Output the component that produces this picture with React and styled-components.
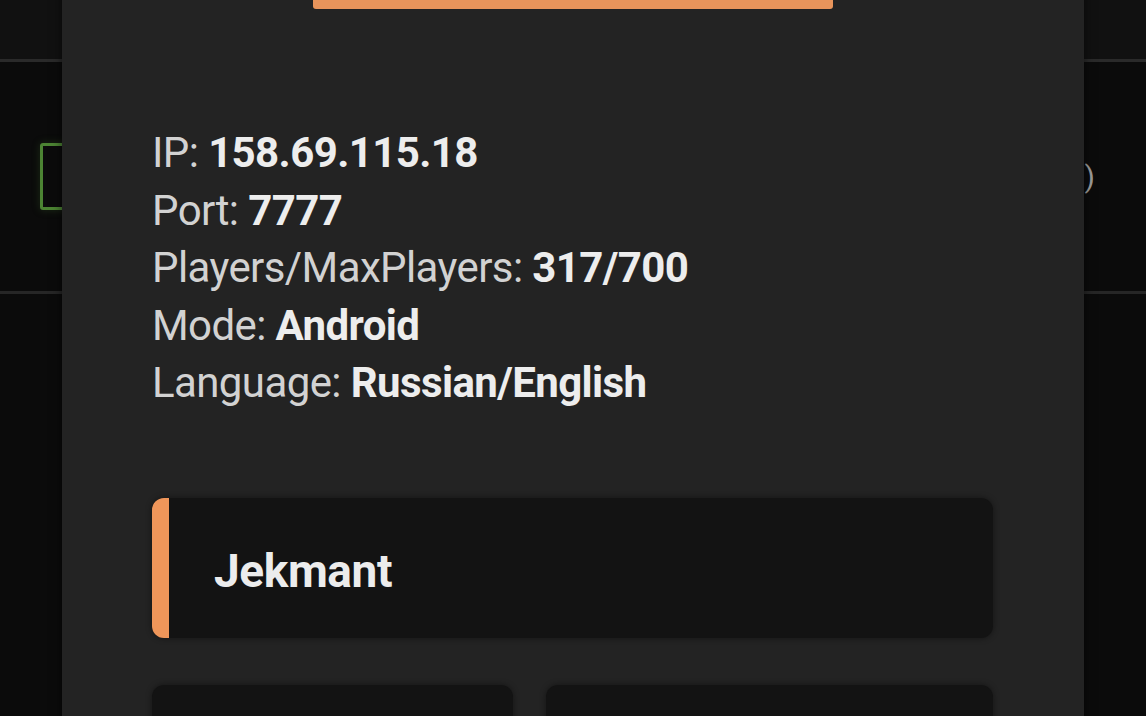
import React from "react";
import styled, { createGlobalStyle } from "styled-components";

const GlobalStyle = createGlobalStyle`
  html, body {
    margin: 0;
    padding: 0;
    width: 1146px;
    height: 716px;
    overflow: hidden;
    background: #0b0b0b;
    font-family: Roboto, "Liberation Sans", sans-serif;
  }
`;

const Page = styled.div`
  position: relative;
  width: 1146px;
  height: 716px;
  overflow: hidden;
  display: flex;
  flex-direction: column;
`;

const TopBar = styled.div`
  height: 59px;
  background: #111111;
  border-bottom: 3px solid #2a2a2a;
`;

const ServerRow = styled.div`
  height: 229px;
  display: flex;
  align-items: center;
  justify-content: space-between;
  padding: 0 51px 0 40px;
  background: #0b0b0b;
  border-bottom: 3px solid #262626;
`;

const StatusBox = styled.div`
  width: 60px;
  height: 61px;
  border: 3px solid #4c8433;
  border-radius: 3px;
  box-shadow: 0 0 8px rgba(76, 132, 51, 0.25);
`;

const Online = styled.span`
  font-size: 30px;
  color: #9c9c9c;
`;

const Dialog = styled.div`
  position: absolute;
  left: 62px;
  top: -50px;
  width: 1022px;
  background: #232323;
  box-shadow: 0 0 10px rgba(0, 0, 0, 0.6);
  padding: 0 91px 200px 90px;
  box-sizing: border-box;
  display: flex;
  flex-direction: column;

  & > * {
    flex-shrink: 0;
  }
`;

const ConnectButton = styled.div`
  align-self: center;
  width: 520px;
  height: 59px;
  background: #e8945b;
  border-radius: 0 0 3px 3px;
`;

const InfoList = styled.div`
  margin-top: 115px;
  display: flex;
  flex-direction: column;
`;

const InfoLine = styled.div`
  font-size: 42px;
  line-height: 57.5px;
  letter-spacing: -0.6px;
  color: #d2d2d2;
  white-space: nowrap;

  b {
    font-weight: 700;
    color: #ededed;
  }
`;

const PlayerCard = styled.div`
  margin-top: 86px;
  height: 140px;
  box-sizing: border-box;
  display: flex;
  align-items: center;
  padding-left: 45px;
  background: #131313;
  border-left: 17px solid #ef965a;
  border-radius: 12px;
  box-shadow: 0 0 6px rgba(0, 0, 0, 0.45);
`;

const PlayerName = styled.span`
  font-size: 46px;
  font-weight: 700;
  letter-spacing: -0.4px;
  color: #ececec;
  margin-top: 6px;
`;

const ActionGrid = styled.div`
  margin-top: 47px;
  display: grid;
  grid-template-columns: 361px 1fr;
  gap: 33px;
`;

const ActionCard = styled.div`
  height: 140px;
  background: #131313;
  border-radius: 12px;
  box-shadow: 0 0 6px rgba(0, 0, 0, 0.45);
`;

const info = [
  ["IP:", "158.69.115.18"],
  ["Port:", "7777"],
  ["Players/MaxPlayers:", "317/700"],
  ["Mode:", "Android"],
  ["Language:", "Russian/English"],
];

export default function App() {
  return (
    <>
      <GlobalStyle />
      <Page>
        <TopBar />
        <ServerRow>
          <StatusBox />
          <Online>(0)</Online>
        </ServerRow>
        <Dialog>
          <ConnectButton />
          <InfoList>
            {info.map(([label, value]) => (
              <InfoLine key={label}>
                {label} <b>{value}</b>
              </InfoLine>
            ))}
          </InfoList>
          <PlayerCard>
            <PlayerName>Jekmant</PlayerName>
          </PlayerCard>
          <ActionGrid>
            <ActionCard />
            <ActionCard />
          </ActionGrid>
        </Dialog>
      </Page>
    </>
  );
}
